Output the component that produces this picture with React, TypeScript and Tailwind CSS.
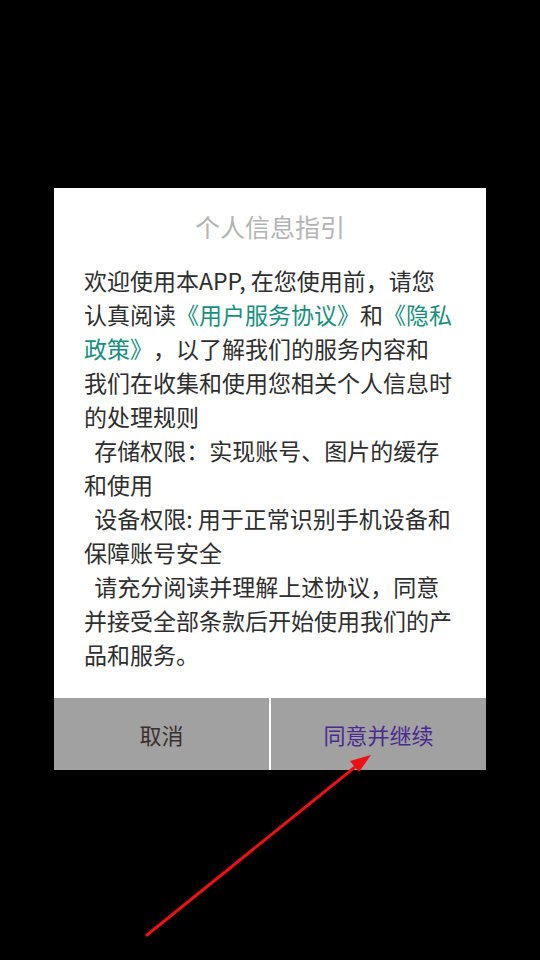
import React from 'react';

const font = { fontFamily: '"Noto Sans CJK SC", "Noto Sans", sans-serif' };

function Link({ children }: { children: React.ReactNode }) {
  return <span className="text-[#16907e]">{children}</span>;
}

export default function App() {
  const lines: React.ReactNode[] = [
    '欢迎使用本APP, 在您使用前，请您',
    <>
      认真阅读<Link>《用户服务协议》</Link>和<Link>《隐私</Link>
    </>,
    <>
      <Link>政策》</Link>，以了解我们的服务内容和
    </>,
    '我们在收集和使用您相关个人信息时',
    '的处理规则',
    '  存储权限：实现账号、图片的缓存',
    '和使用',
    '  设备权限: 用于正常识别手机设备和',
    '保障账号安全',
    '  请充分阅读并理解上述协议，同意',
    '并接受全部条款后开始使用我们的产',
    '品和服务。',
  ];

  return (
    <div className="relative w-[540px] h-[960px] bg-black overflow-hidden [text-spacing-trim:space-all]" style={font}>
      <div className="pt-[188px] px-[54px]">
        <div className="bg-white w-[432px]">
          <div className="pt-[18px] h-[59px] text-center text-[25px] leading-[40px] text-[#b4b4b4]">
            个人信息指引
          </div>
          <div className="pt-[16px] pb-[27px] pl-[30px] pr-[20px] text-[23px] leading-[34px] text-[#2e2e2e]">
            {lines.map((l, i) => (
              <div key={i} className="whitespace-pre">
                {l}
              </div>
            ))}
          </div>
          <div className="flex h-[72px] bg-[#a1a1a1]">
            <button className="flex-1 flex items-center justify-center text-[22px] text-[#3a3030]">取消</button>
            <div className="w-[2px] bg-white" />
            <button className="flex-1 flex items-center justify-center text-[22px] text-[#4b2a92]">同意并继续</button>
          </div>
        </div>
      </div>

      {/* red annotation arrow */}
      <svg className="absolute left-0 top-0" width="540" height="960" viewBox="0 0 540 960">
        <line x1="147" y1="935" x2="360" y2="763" stroke="#f01010" strokeWidth="3" strokeLinecap="round" />
        <polygon points="371,755 350,761 359,772" fill="#f01010" />
      </svg>
    </div>
  );
}
